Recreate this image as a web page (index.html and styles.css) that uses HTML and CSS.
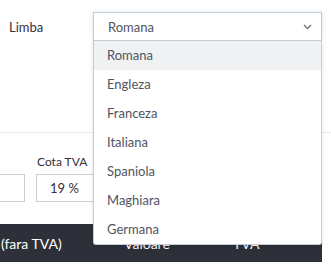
FILE: index.html
```html
<!DOCTYPE html>
<html lang="en">
<head>
    <meta charset="UTF-8">
    <title>Factura</title>
    <link rel="stylesheet" href="styles.css">
</head>
<body>
    <div class="top">
        <div class="row">
            <label class="row-label">Limba</label>
            <div class="select-wrap">
                <div class="select">
                    <span>Romana</span>
                    <svg class="chevron" width="9" height="6" viewBox="0 0 9 6">
                        <polyline points="1,1 4.5,4.5 8,1" fill="none" stroke="#6b6f78" stroke-width="1.3"/>
                    </svg>
                </div>
                <ul class="dropdown">
                    <li class="active">Romana</li>
                    <li>Engleza</li>
                    <li>Franceza</li>
                    <li>Italiana</li>
                    <li>Spaniola</li>
                    <li>Maghiara</li>
                    <li>Germana</li>
                </ul>
            </div>
        </div>
    </div>

    <div class="fields">
        <div class="field field-cut">
            <label>&nbsp;</label>
            <input type="text" value="">
        </div>
        <div class="field field-tva">
            <label>Cota TVA</label>
            <input type="text" value="19 %">
        </div>
    </div>

    <div class="table-head">
        <span>(fara TVA)</span>
        <span>Valoare</span>
        <span>TVA</span>
    </div>
</body>
</html>
```

FILE: styles.css
```css
body {
    margin: 0;
    font-family: Lato, "Open Sans", sans-serif;
    font-size: 13px;
    color: #34303d;
    background: #fff;
    overflow: hidden;
}
.top {
    height: 132px;
    border-bottom: 1px solid #e9eaec;
}
.row {
    display: flex;
    align-items: center;
    padding-top: 12px;
}
.row-label {
    width: 84px;
    padding-left: 9px;
}
.select-wrap {
    position: relative;
    width: 229px;
}
.select {
    display: flex;
    align-items: center;
    justify-content: space-between;
    box-sizing: border-box;
    height: 29px;
    padding: 0 9px 0 14px;
    border: 1px solid #c9ccd1;
    color: #4f5461;
    box-shadow: 0 0 4px rgba(120, 170, 230, 0.35);
}
.chevron {
    display: block;
}
.dropdown {
    position: absolute;
    top: 29px;
    left: 0;
    right: 0;
    margin: 0;
    padding: 0;
    list-style: none;
    background: #fff;
    border: 1px solid #c9ccd1;
    border-top: 0;
    border-radius: 0 0 3px 3px;
    box-shadow: 0 2px 4px rgba(0, 0, 0, 0.12);
    z-index: 2;
}
.dropdown li {
    height: 29px;
    line-height: 29px;
    padding-left: 13px;
    color: #4f5461;
}
.dropdown li.active {
    background: #f0f1f3;
}
.fields {
    display: flex;
    gap: 11px;
    padding-top: 20px;
}
.field label {
    display: block;
    font-size: 12px;
    line-height: 18px;
    margin-bottom: 3px;
    padding-left: 1px;
}
.field input {
    box-sizing: border-box;
    height: 28px;
    border: 1px solid #c9ccd1;
    border-radius: 0;
    font-family: inherit;
    font-size: 13px;
    color: #34303d;
    outline: none;
}
.field-cut {
    margin-left: -56px;
}
.field-cut input {
    width: 81px;
}
.field-tva input {
    width: 90px;
    padding-left: 13px;
}
.table-head {
    display: grid;
    grid-template-columns: 124px 109px 1fr;
    align-items: center;
    height: 38px;
    margin-top: 22px;
    margin-right: 9px;
    background: #2d3039;
    color: #fff;
    font-size: 14px;
}
.table-head span:first-child {
    padding-left: 1px;
}
```
